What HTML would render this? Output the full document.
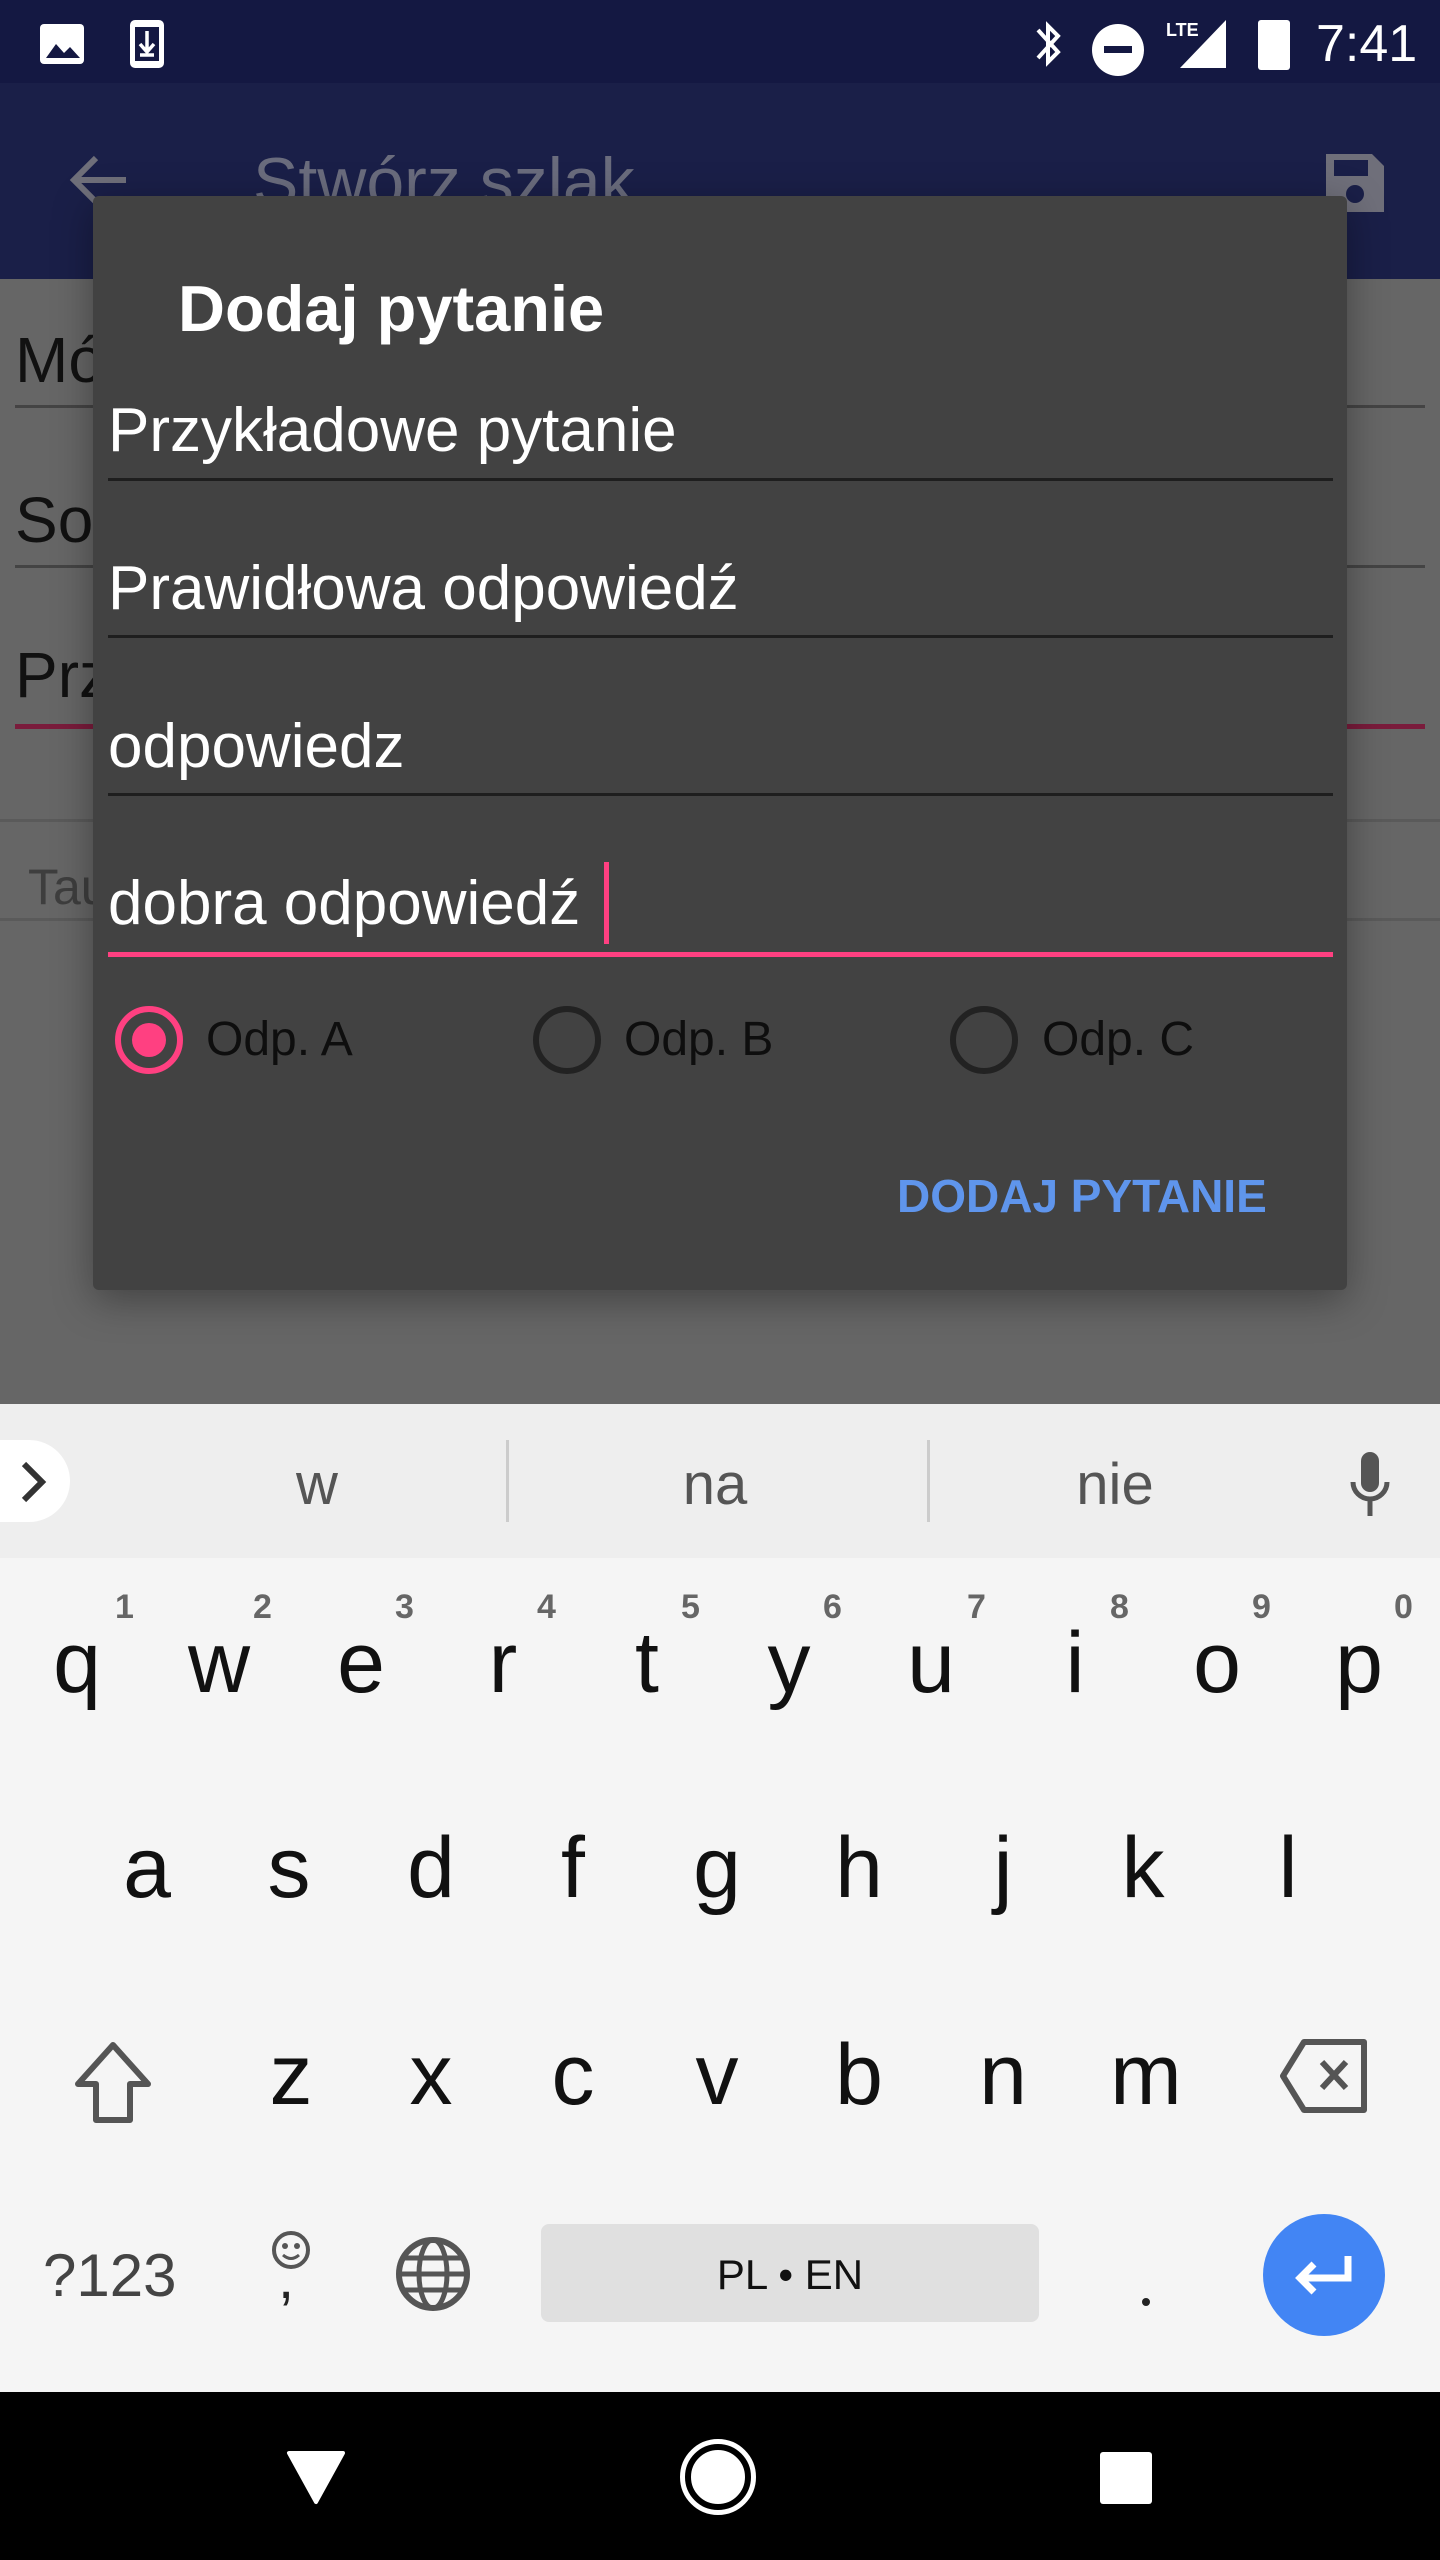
<!DOCTYPE html>
<html><head><meta charset="utf-8"><style>
*{margin:0;padding:0;box-sizing:border-box}
body{width:1440px;height:2560px;position:relative;overflow:hidden;background:#666;font-family:"Liberation Sans",Roboto,sans-serif}
.a{position:absolute}
.t{position:absolute;line-height:1;white-space:nowrap}
.k{position:absolute;width:120px;text-align:center;font-size:86px;color:#111;line-height:1}
.n{position:absolute;font-size:34px;font-weight:bold;color:#666;line-height:1}
</style></head><body>
<!-- status bar -->
<div class="a" style="left:0;top:0;width:1440px;height:83px;background:#141842"></div>
<svg class="a" style="top:22px;left:38px" width="50" height="44" viewBox="0 0 50 44"><rect x="2" y="2" width="44" height="40" rx="4" fill="#fff"/><path d="M8 36 L18 22 L26 31 L32 25 L42 36 Z" fill="#141842"/></svg>
<svg class="a" style="left:128px;top:18px" width="40" height="52" viewBox="0 0 40 52"><rect x="2" y="2" width="34" height="48" rx="5" fill="#fff"/><rect x="7" y="9" width="24" height="34" fill="#141842"/><path d="M19 13 V33 M12 26 L19 34 L26 26 M12 37 H26" stroke="#fff" stroke-width="3.5" fill="none"/></svg>
<svg class="a" style="left:1030px;top:16px" width="36" height="56" viewBox="0 0 36 56"><path d="M8 14 L28 36 L18 46 V10 L28 20 L8 42" stroke="#fff" stroke-width="4" fill="none"/></svg>
<div class="a" style="left:1092px;top:24px;width:52px;height:52px;border-radius:50%;background:#fff"></div>
<div class="a" style="left:1104px;top:46px;width:28px;height:7px;background:#141842"></div>
<svg class="a" style="left:1160px;top:16px" width="70" height="56" viewBox="0 0 70 56"><path d="M66 4 V52 H20 Z" fill="#fff"/><text x="6" y="20" font-size="18" font-family="Liberation Sans" font-weight="bold" fill="#fff">LTE</text></svg>
<div class="a" style="left:1258px;top:20px;width:32px;height:50px;background:#fff;border-radius:3px"></div>
<div class="t" style="left:1316px;top:18px;font-size:52px;color:#fff">7:41</div>
<!-- app bar -->
<div class="a" style="left:0;top:83px;width:1440px;height:196px;background:#1a1f48"></div>
<svg class="a" style="left:66px;top:150px" width="64" height="60" viewBox="0 0 64 60"><path d="M60 30 H8 M30 8 L8 30 L30 52" stroke="#6f6f7a" stroke-width="6" fill="none"/></svg>
<div class="t" style="left:253px;top:148px;font-size:68px;color:#6a6c7d">Stwórz szlak</div>
<svg class="a" style="left:1322px;top:150px" width="66" height="66" viewBox="0 0 66 66"><path d="M4 4 H50 L62 16 V62 H4 Z" fill="#6f6f7a"/><rect x="12" y="10" width="34" height="16" fill="#1a1f48"/><circle cx="33" cy="44" r="9" fill="#1a1f48"/></svg>
<!-- background form -->
<div class="a" style="left:0;top:279px;width:1440px;height:1125px;background:#666"></div>
<div class="t" style="left:15px;top:328px;font-size:64px;color:#111">Mó</div>
<div class="a" style="left:15px;top:405px;width:1410px;height:3px;background:#444"></div>
<div class="t" style="left:15px;top:488px;font-size:64px;color:#111">Sos</div>
<div class="a" style="left:15px;top:565px;width:1410px;height:3px;background:#444"></div>
<div class="t" style="left:15px;top:643px;font-size:64px;color:#111">Prz</div>
<div class="a" style="left:15px;top:724px;width:1410px;height:5px;background:#7a1c3c"></div>
<div class="a" style="left:0;top:819px;width:1440px;height:3px;background:#5a5a5a"></div>
<div class="t" style="left:28px;top:862px;font-size:50px;color:#3e3e3e">Tau</div>
<div class="a" style="left:0;top:918px;width:1440px;height:3px;background:#5a5a5a"></div>
<!-- dialog -->
<div class="a" style="left:93px;top:196px;width:1254px;height:1094px;background:#424242;border-radius:6px;box-shadow:0 10px 40px rgba(0,0,0,.35)"></div>
<div class="t" style="left:178px;top:276px;font-size:65px;font-weight:bold;color:#fff">Dodaj pytanie</div>
<div class="t" style="left:108px;top:400px;font-size:62px;color:#fff">Przykładowe pytanie</div>
<div class="a" style="left:108px;top:478px;width:1225px;height:3px;background:#1e1e1e"></div>
<div class="t" style="left:108px;top:558px;font-size:62px;color:#fff">Prawidłowa odpowiedź</div>
<div class="a" style="left:108px;top:635px;width:1225px;height:3px;background:#1e1e1e"></div>
<div class="t" style="left:108px;top:716px;font-size:62px;color:#fff">odpowiedz</div>
<div class="a" style="left:108px;top:793px;width:1225px;height:3px;background:#1e1e1e"></div>
<div class="t" style="left:108px;top:873px;font-size:62px;color:#fff">dobra odpowiedź</div>
<div class="a" style="left:604px;top:862px;width:5px;height:82px;background:#ff4081"></div>
<div class="a" style="left:108px;top:952px;width:1225px;height:5px;background:#ff4081"></div>
<!-- radios -->
<div class="a" style="left:115px;top:1006px;width:68px;height:68px;border-radius:50%;border:6px solid #ff4081"></div>
<div class="a" style="left:132px;top:1023px;width:34px;height:34px;border-radius:50%;background:#ff4081"></div>
<div class="t" style="left:206px;top:1016px;font-size:48px;color:#0e0e0e">Odp. A</div>
<div class="a" style="left:533px;top:1006px;width:68px;height:68px;border-radius:50%;border:6px solid #222"></div>
<div class="t" style="left:624px;top:1016px;font-size:48px;color:#0e0e0e">Odp. B</div>
<div class="a" style="left:950px;top:1006px;width:68px;height:68px;border-radius:50%;border:6px solid #222"></div>
<div class="t" style="left:1042px;top:1016px;font-size:48px;color:#0e0e0e">Odp. C</div>
<div class="t" style="left:897px;top:1173px;font-size:46px;font-weight:bold;color:#5f95ec">DODAJ PYTANIE</div>
<!-- keyboard -->
<div class="a" style="left:0;top:1404px;width:1440px;height:154px;background:#eeeeee"></div>
<div class="a" style="left:0;top:1558px;width:1440px;height:834px;background:#f5f5f5"></div>
<div class="a" style="left:-40px;top:1440px;width:110px;height:82px;border-radius:41px;background:#fff"></div>
<svg class="a" style="left:16px;top:1458px" width="34" height="48" viewBox="0 0 34 48"><path d="M8 6 L26 24 L8 42" stroke="#333" stroke-width="6" fill="none"/></svg>
<div class="t" style="left:257px;top:1456px;width:120px;text-align:center;font-size:58px;color:#555">w</div>
<div class="a" style="left:506px;top:1440px;width:3px;height:82px;background:#ccc"></div>
<div class="t" style="left:615px;top:1456px;width:200px;text-align:center;font-size:58px;color:#555">na</div>
<div class="a" style="left:927px;top:1440px;width:3px;height:82px;background:#ccc"></div>
<div class="t" style="left:1015px;top:1456px;width:200px;text-align:center;font-size:58px;color:#555">nie</div>
<svg class="a" style="left:1348px;top:1450px" width="44" height="70" viewBox="0 0 44 70"><rect x="13" y="2" width="18" height="40" rx="9" fill="#555"/><path d="M5 32 A17 17 0 0 0 39 32 M22 50 V66" stroke="#555" stroke-width="5" fill="none"/></svg>
<!-- row1 -->
<div class="k" style="left:17px;top:1620px">q</div><div class="n" style="left:115px;top:1590px">1</div>
<div class="k" style="left:159px;top:1620px">w</div><div class="n" style="left:253px;top:1590px">2</div>
<div class="k" style="left:301px;top:1620px">e</div><div class="n" style="left:395px;top:1590px">3</div>
<div class="k" style="left:443px;top:1620px">r</div><div class="n" style="left:537px;top:1590px">4</div>
<div class="k" style="left:587px;top:1620px">t</div><div class="n" style="left:681px;top:1590px">5</div>
<div class="k" style="left:729px;top:1620px">y</div><div class="n" style="left:823px;top:1590px">6</div>
<div class="k" style="left:871px;top:1620px">u</div><div class="n" style="left:967px;top:1590px">7</div>
<div class="k" style="left:1015px;top:1620px">i</div><div class="n" style="left:1110px;top:1590px">8</div>
<div class="k" style="left:1157px;top:1620px">o</div><div class="n" style="left:1252px;top:1590px">9</div>
<div class="k" style="left:1299px;top:1620px">p</div><div class="n" style="left:1394px;top:1590px">0</div>
<!-- row2 -->
<div class="k" style="left:87px;top:1825px">a</div>
<div class="k" style="left:229px;top:1825px">s</div>
<div class="k" style="left:371px;top:1825px">d</div>
<div class="k" style="left:513px;top:1825px">f</div>
<div class="k" style="left:657px;top:1825px">g</div>
<div class="k" style="left:799px;top:1825px">h</div>
<div class="k" style="left:943px;top:1825px">j</div>
<div class="k" style="left:1083px;top:1825px">k</div>
<div class="k" style="left:1228px;top:1825px">l</div>
<!-- row3 -->
<svg class="a" style="left:72px;top:2040px" width="82" height="84" viewBox="0 0 82 84"><path d="M41 5 L76 44 H58 V80 H24 V44 H6 Z" stroke="#555" stroke-width="6" fill="none" stroke-linejoin="round"/></svg>
<div class="k" style="left:231px;top:2032px">z</div>
<div class="k" style="left:371px;top:2032px">x</div>
<div class="k" style="left:513px;top:2032px">c</div>
<div class="k" style="left:657px;top:2032px">v</div>
<div class="k" style="left:799px;top:2032px">b</div>
<div class="k" style="left:943px;top:2032px">n</div>
<div class="k" style="left:1086px;top:2032px">m</div>
<svg class="a" style="left:1278px;top:2038px" width="92" height="76" viewBox="0 0 92 76"><path d="M26 4 H86 V72 H26 L5 38 Z" stroke="#555" stroke-width="6" fill="none" stroke-linejoin="round"/><path d="M44 24 L68 50 M68 24 L44 50" stroke="#555" stroke-width="6"/></svg>
<!-- row4 -->
<div class="t" style="left:43px;top:2246px;font-size:60px;color:#444">?123</div>
<svg class="a" style="left:270px;top:2230px" width="44" height="40" viewBox="0 0 44 40"><circle cx="21" cy="20" r="17" stroke="#555" stroke-width="4" fill="none"/><circle cx="15" cy="16" r="3" fill="#555"/><circle cx="27" cy="16" r="3" fill="#555"/><path d="M13 25 Q21 32 29 25" stroke="#555" stroke-width="3" fill="none"/></svg>
<div class="t" style="left:278px;top:2250px;font-size:58px;color:#222">,</div>
<svg class="a" style="left:395px;top:2236px" width="76" height="76" viewBox="0 0 76 76"><circle cx="38" cy="38" r="34" stroke="#555" stroke-width="6" fill="none"/><ellipse cx="38" cy="38" rx="14" ry="34" stroke="#555" stroke-width="5" fill="none"/><path d="M4 38 H72 M10 22 H66 M10 54 H66" stroke="#555" stroke-width="5"/></svg>
<div class="a" style="left:541px;top:2224px;width:498px;height:98px;background:#e0e0e0;border-radius:8px"></div>
<div class="t" style="left:541px;top:2254px;width:498px;text-align:center;font-size:42px;color:#111">PL • EN</div>
<div class="a" style="left:1142px;top:2298px;width:8px;height:8px;border-radius:50%;background:#222"></div>
<div class="a" style="left:1263px;top:2214px;width:122px;height:122px;border-radius:50%;background:#4285f4"></div>
<svg class="a" style="left:1290px;top:2248px" width="70" height="56" viewBox="0 0 70 56"><path d="M58 8 V30 H10 M24 16 L10 30 L24 44" stroke="#fff" stroke-width="7" fill="none"/></svg>
<!-- nav bar -->
<div class="a" style="left:0;top:2392px;width:1440px;height:168px;background:#000"></div>
<svg class="a" style="left:286px;top:2450px" width="60" height="56" viewBox="0 0 60 56"><path d="M3 3 H57 L30 52 Z" fill="#fff" stroke="#fff" stroke-linejoin="round" stroke-width="4"/></svg>
<div class="a" style="left:680px;top:2439px;width:76px;height:76px;border-radius:50%;border:5px solid #fff"></div>
<div class="a" style="left:688px;top:2447px;width:60px;height:60px;border-radius:50%;border:3px solid #000;background:#fff"></div>
<div class="a" style="left:1100px;top:2452px;width:52px;height:52px;background:#fff;border-radius:3px"></div>
</body></html>
